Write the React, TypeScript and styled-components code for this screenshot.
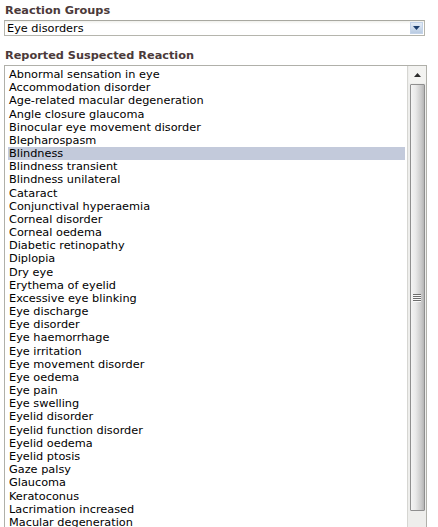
import styled, { createGlobalStyle } from "styled-components";

const reactions = [
  "Abnormal sensation in eye",
  "Accommodation disorder",
  "Age-related macular degeneration",
  "Angle closure glaucoma",
  "Binocular eye movement disorder",
  "Blepharospasm",
  "Blindness",
  "Blindness transient",
  "Blindness unilateral",
  "Cataract",
  "Conjunctival hyperaemia",
  "Corneal disorder",
  "Corneal oedema",
  "Diabetic retinopathy",
  "Diplopia",
  "Dry eye",
  "Erythema of eyelid",
  "Excessive eye blinking",
  "Eye discharge",
  "Eye disorder",
  "Eye haemorrhage",
  "Eye irritation",
  "Eye movement disorder",
  "Eye oedema",
  "Eye pain",
  "Eye swelling",
  "Eyelid disorder",
  "Eyelid function disorder",
  "Eyelid oedema",
  "Eyelid ptosis",
  "Gaze palsy",
  "Glaucoma",
  "Keratoconus",
  "Lacrimation increased",
  "Macular degeneration",
];

const selected = "Blindness";

const GlobalStyle = createGlobalStyle`
  body {
    margin: 0;
    background: #fff;
    font-family: "DejaVu Sans", Verdana, sans-serif;
    overflow: hidden;
  }
`;

const Page = styled.div`
  width: 438px;
  padding: 4px 0 0 4px;
  box-sizing: border-box;
`;

const Label = styled.div<{ $gap?: number }>`
  font-size: 11.3px;
  font-weight: bold;
  color: #4b3a3a;
  line-height: 14px;
  padding-left: 1px;
  margin-top: ${(p) => p.$gap ?? 0}px;
  margin-bottom: 2px;
`;

const Select = styled.div`
  width: 421px;
  height: 16px;
  box-sizing: border-box;
  border: 1px solid #b5b5ad;
  border-top-color: #a8a8a0;
  background: linear-gradient(#f0f0ec 0, #fff 3px);
  display: flex;
  align-items: center;
  justify-content: space-between;
  padding: 0 1px 0 2px;
  font-size: 11.3px;
  color: #000;
`;

const DropButton = styled.div`
  width: 13px;
  height: 12px;
  background: linear-gradient(#e4ecf6, #b9cbe2);
  border: 1px solid #c3d3e8;
  box-sizing: border-box;
  display: flex;
  align-items: center;
  justify-content: center;
`;

const ListBox = styled.div`
  width: 423px;
  height: 480px;
  box-sizing: border-box;
  border: 1px solid #b0b0aa;
  display: flex;
  overflow: hidden;
`;

const Items = styled.div`
  flex: 1;
  padding: 2px 0 0 3px;
  min-width: 0;
`;

const Item = styled.div<{ $active?: boolean }>`
  font-size: 11.3px;
  line-height: 13.18px;
  height: 13.18px;
  color: #000;
  white-space: nowrap;
  padding-left: 1px;
  margin-right: 2px;
  background: ${(p) => (p.$active ? "#c3cadb" : "transparent")};
`;

const Scrollbar = styled.div`
  width: 18px;
  border-left: 1px solid #d6d6d2;
  background: #eeeeec;
  display: flex;
  flex-direction: column;
  align-items: center;
`;

const ArrowButton = styled.div`
  width: 17px;
  height: 17px;
  background: #f3f3f1;
  display: flex;
  align-items: center;
  justify-content: center;
`;

const Thumb = styled.div`
  width: 15px;
  height: 427px;
  margin-top: 1px;
  box-sizing: border-box;
  border: 1px solid #8f8f8f;
  border-radius: 1px;
  background: linear-gradient(
    to right,
    #f4f4f4 0%,
    #e9e9e9 35%,
    #c9c9c9 80%,
    #b5b5b5 100%
  );
  display: flex;
  align-items: center;
  justify-content: center;
`;

const Grip = styled.div`
  width: 8px;
  display: flex;
  flex-direction: column;
  gap: 1px;

  span {
    display: block;
    height: 1px;
    background: #6d6d6d;
    box-shadow: 0 1px 0 #fafafa;
  }
`;

export default function App() {
  return (
    <>
      <GlobalStyle />
      <Page>
        <Label>Reaction Groups</Label>
        <Select>
          <span>Eye disorders</span>
          <DropButton>
            <svg width="7" height="4" viewBox="0 0 7 4">
              <path d="M0 0h7L3.5 4z" fill="#1d3f6e" />
            </svg>
          </DropButton>
        </Select>
        <Label $gap={13}>Reported Suspected Reaction</Label>
        <ListBox>
          <Items>
            {reactions.map((r) => (
              <Item key={r} $active={r === selected}>
                {r}
              </Item>
            ))}
          </Items>
          <Scrollbar>
            <ArrowButton>
              <svg width="7" height="4" viewBox="0 0 7 4">
                <path d="M3.5 0L7 4H0z" fill="#2b2b2b" />
              </svg>
            </ArrowButton>
            <Thumb>
              <Grip>
                <span />
                <span />
                <span />
                <span />
              </Grip>
            </Thumb>
          </Scrollbar>
        </ListBox>
      </Page>
    </>
  );
}
